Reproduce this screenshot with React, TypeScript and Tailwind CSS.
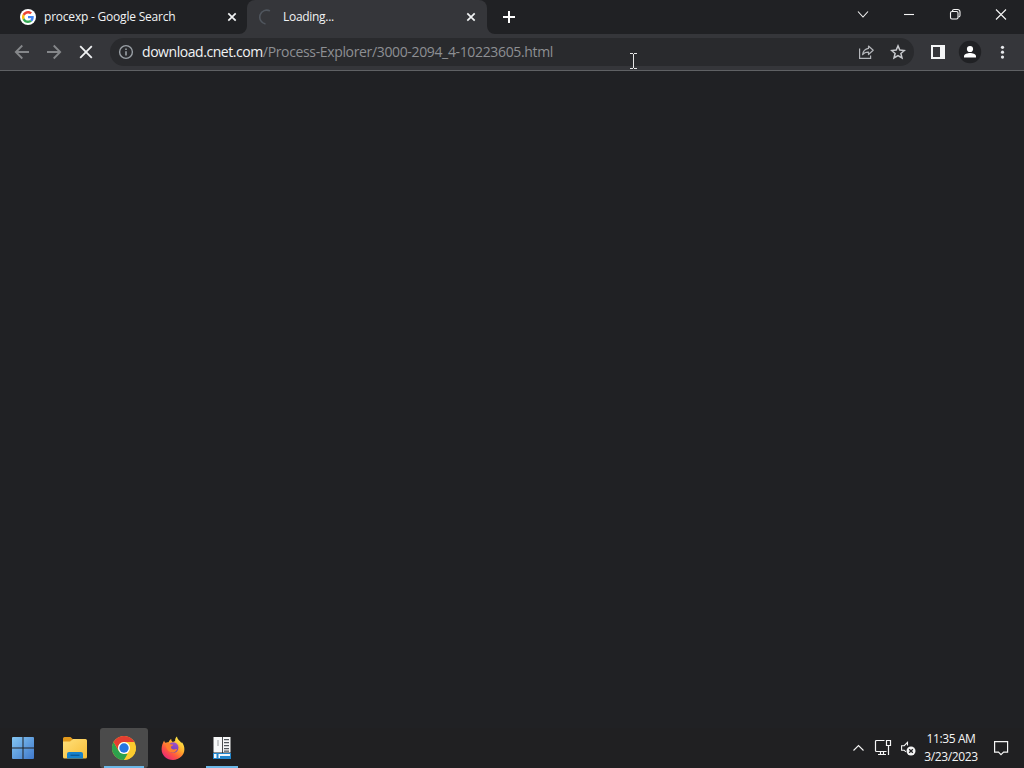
import type { ReactNode } from 'react';

function GoogleIcon() {
  return (
    <svg width="16" height="16" viewBox="0 0 16 16" className="shrink-0">
      <circle cx="8" cy="8" r="8" fill="#fff" />
      <g transform="translate(2 2) scale(0.25)">
        <path fill="#EA4335" d="M24 9.5c3.54 0 6.71 1.22 9.21 3.6l6.85-6.85C35.9 2.38 30.47 0 24 0 14.62 0 6.51 5.38 2.56 13.22l7.98 6.19C12.43 13.72 17.74 9.5 24 9.5z" />
        <path fill="#4285F4" d="M46.98 24.55c0-1.57-.15-3.09-.38-4.55H24v9.02h12.94c-.58 2.96-2.26 5.48-4.78 7.18l7.73 6c4.51-4.18 7.09-10.36 7.09-17.65z" />
        <path fill="#FBBC05" d="M10.53 28.59c-.48-1.45-.76-2.99-.76-4.59s.27-3.14.76-4.59l-7.98-6.19C.92 16.46 0 20.12 0 24c0 3.88.92 7.54 2.56 10.78l7.97-6.19z" />
        <path fill="#34A853" d="M24 48c6.48 0 11.93-2.13 15.89-5.81l-7.73-6c-2.15 1.45-4.92 2.3-8.16 2.3-6.26 0-11.57-4.22-13.47-9.91l-7.98 6.19C6.51 42.62 14.62 48 24 48z" />
      </g>
    </svg>
  );
}

function TabClose() {
  return (
    <svg width="16" height="16" viewBox="0 0 16 16" className="shrink-0" stroke="#f1f3f4" strokeWidth="1.7">
      <path d="M4.3 4.3l7.4 7.4M11.7 4.3l-7.4 7.4" />
    </svg>
  );
}

function TabStrip() {
  return (
    <div className="flex h-[34px] bg-[#202124] text-[12px] text-[#f1f3f4]">
      <div className="flex w-[247px] items-center pl-5 pr-[7px]">
        <GoogleIcon />
        <span className="ml-2 flex-1 whitespace-nowrap tracking-[-0.21px]">procexp - Google Search</span>
        <TabClose />
      </div>
      <div className="relative flex w-[240px] items-center rounded-t-lg bg-[#35363a] pl-[11px] pr-2">
        <svg width="8" height="8" viewBox="0 0 8 8" className="absolute -left-2 bottom-0">
          <path d="M8 0v8H0a8 8 0 0 0 8-8z" fill="#35363a" />
        </svg>
        <svg width="8" height="8" viewBox="0 0 8 8" className="absolute -right-2 bottom-0">
          <path d="M0 0v8h8a8 8 0 0 1-8-8z" fill="#35363a" />
        </svg>
        <svg width="16" height="16" viewBox="0 0 16 16" className="shrink-0" fill="none">
          <path d="M12 1.900A7 7 0 1 0 7.500 15" stroke="#50565e" strokeWidth="1.600" />
        </svg>
        <span className="ml-[9px] flex-1 whitespace-nowrap tracking-[-0.3px]">Loading...</span>
        <TabClose />
      </div>
      <div className="flex w-11 items-center justify-center">
        <svg width="14" height="14" viewBox="0 0 14 14" stroke="#fff" strokeWidth="2">
          <path d="M7 1v12M1 7h12" />
        </svg>
      </div>
      <div className="ml-auto flex h-7">
        <WindowButton>
          <path d="M3 5.5l5 5.5 5-5.5" />
        </WindowButton>
        <WindowButton>
          <path d="M3 8.5h10" />
        </WindowButton>
        <WindowButton>
          <rect x="3.5" y="5.5" width="7.5" height="7.5" rx="1.5" />
          <path d="M5.5 5.2c0-1 .7-1.7 1.6-1.7h3.4a2.5 2.5 0 0 1 2.5 2.5v3.4c0 .9-.6 1.6-1.6 1.6" />
        </WindowButton>
        <WindowButton>
          <path d="M3 3.5l10 10M13 3.5l-10 10" />
        </WindowButton>
      </div>
    </div>
  );
}

function WindowButton({ children }: { children: ReactNode }) {
  return (
    <div className="flex w-[46px] items-center justify-center">
      <svg width="16" height="16" viewBox="0 0 16 16" fill="none" stroke="#f5f5f5" strokeWidth="1.1">
        {children}
      </svg>
    </div>
  );
}

function Toolbar() {
  return (
    <div className="flex h-[37px] items-center border-b border-[#5f6164] bg-[#35363a] px-[14px]">
      <div className="flex w-24 gap-4">
        <svg width="16" height="16" viewBox="0 0 16 16" fill="none" stroke="#85878a" strokeWidth="1.8" className="shrink-0">
          <path d="M15 8H2M8.3 1.5L1.8 8l6.5 6.5" />
        </svg>
        <svg width="16" height="16" viewBox="0 0 16 16" fill="none" stroke="#85878a" strokeWidth="1.8" className="shrink-0">
          <path d="M1 8h13M7.7 1.5L14.2 8l-6.5 6.5" />
        </svg>
        <svg width="16" height="16" viewBox="0 0 16 16" stroke="#f1f3f4" strokeWidth="1.8" className="shrink-0">
          <path d="M2.2 2.2l11.6 11.6M13.8 2.2L2.2 13.8" />
        </svg>
      </div>
      <div className="flex h-7 w-[804px] items-center rounded-full bg-[#292a2d] px-2">
        <svg width="16" height="16" viewBox="0 0 16 16" fill="none" stroke="#9aa0a6" strokeWidth="1.4" className="shrink-0">
          <circle cx="8" cy="8" r="6.4" />
          <path d="M8 7.2v4.2M8 4.4v1.6" strokeWidth="1.6" />
        </svg>
        <span className="ml-2 flex-1 whitespace-nowrap pb-px text-[14px] tracking-[-0.35px] text-[#8d8f93]">
          <span className="tracking-[-0.44px] text-[#f1f3f4]">download.cnet.com</span>
          /Process-Explorer/3000-2094_4-10223605.html
        </span>
        <svg width="16" height="16" viewBox="0 0 16 16" fill="none" stroke="#b4b6ba" strokeWidth="1.2" className="mr-4">
          <path d="M1.600 4.500v9.900h11v-3" />
          <path d="M10.500 2l4.700 4.200-4.700 4.300V8.100C7.800 8 6 8.800 4.600 10.700 5 7.300 6.900 5 10.500 4.400z" strokeLinejoin="round" />
        </svg>
        <svg width="16" height="16" viewBox="0 0 16 16" fill="none" stroke="#c8cace" strokeWidth="1.5">
          <path d="M8 1.9l1.8 4.2 4.6.4-3.5 3 1.1 4.5-4-2.4L4 14l1.1-4.5-3.5-3 4.6-.4z" />
        </svg>
      </div>
      <div className="ml-auto flex items-center gap-3">
        <svg width="16" height="16" viewBox="0 0 16 16">
          <path d="M1 1h14v14H1zM3 3v10h7V3z" fill="#f4f5f6" fillRule="evenodd" />
        </svg>
        <svg width="24" height="24" viewBox="0 0 24 24">
          <circle cx="12" cy="12" r="11.2" fill="#202124" />
          <circle cx="12" cy="9" r="3.1" fill="#fff" />
          <path d="M6 17.500v-1.400c0-2.100 3.600-3.200 6-3.200s6 1.100 6 3.200v1.400z" fill="#fff" />
        </svg>
        <svg width="16" height="16" viewBox="0 0 16 16" fill="#e8eaed">
          <circle cx="8.500" cy="3.300" r="1.600" />
          <circle cx="8.500" cy="8.200" r="1.600" />
          <circle cx="8.500" cy="13.100" r="1.600" />
        </svg>
      </div>
    </div>
  );
}

function StartIcon() {
  return (
    <svg width="22" height="22" viewBox="0 0 22 22">
      <defs>
        <linearGradient id="start" gradientUnits="userSpaceOnUse" x1="0" y1="0" x2="22" y2="22">
          <stop offset="0" stopColor="#84c6f2" />
          <stop offset="1" stopColor="#3f78cc" />
        </linearGradient>
      </defs>
      <path d="M1 0h9.5v10.5H0V1a1 1 0 0 1 1-1zM11.5 0H21a1 1 0 0 1 1 1v9.5H11.5zM0 11.5h10.5V22H1a1 1 0 0 1-1-1zM11.5 11.5H22V21a1 1 0 0 1-1 1h-9.5z" fill="url(#start)" />
    </svg>
  );
}

function FolderIcon() {
  return (
    <svg width="24" height="22" viewBox="0 0 24 22">
      <defs>
        <linearGradient id="folder" x1="0" y1="0" x2="1" y2="1">
          <stop offset="0" stopColor="#ffe07a" />
          <stop offset="1" stopColor="#f8bd36" />
        </linearGradient>
      </defs>
      <path d="M0 5V1.5A1.5 1.5 0 0 1 1.5 0h6L10 2.200 7.500 5z" fill="#e39a1c" />
      <path d="M0 4.500h7L10 2h12.500A1.500 1.500 0 0 1 24 3.500V20a1.500 1.500 0 0 1-1.500 1.500h-21A1.500 1.500 0 0 1 0 20z" fill="url(#folder)" />
      <path d="M4 21.500V17a2 2 0 0 1 2-2h12a2 2 0 0 1 2 2v4.500z" fill="#1781cb" />
      <path d="M7.500 18.300h9" stroke="#0b5a99" strokeWidth="1.400" />
    </svg>
  );
}

function ChromeIcon() {
  return (
    <svg width="24" height="24" viewBox="0 0 24 24">
      <circle cx="12" cy="12" r="12" fill="#fccb2e" />
      <path d="M1.600 6l5.200 9 5.200 3h5.200L12 24A12 12 0 0 1 1.600 6z" fill="#2da14c" />
      <path d="M12 24l5.200-9V12h5l1.700 1.500A12 12 0 0 1 12 24z" fill="#fccb2e" />
      <path d="M1.600 6A12 12 0 0 1 22.400 6H12a6 6 0 0 0-5.200 9z" fill="#e43e31" />
      <circle cx="12" cy="12" r="6" fill="#fff" />
      <circle cx="12" cy="12" r="4.700" fill="#2676e1" />
    </svg>
  );
}

function FirefoxIcon() {
  return (
    <svg width="24" height="24" viewBox="0 0 24 24">
      <defs>
        <linearGradient id="fox" x1="0.85" y1="0.1" x2="0.2" y2="0.95">
          <stop offset="0" stopColor="#fff04a" />
          <stop offset="0.4" stopColor="#ffa62b" />
          <stop offset="0.68" stopColor="#ff593e" />
          <stop offset="1" stopColor="#e92778" />
        </linearGradient>
        <linearGradient id="globe" x1="0.7" y1="0" x2="0.3" y2="1">
          <stop offset="0" stopColor="#a650c8" />
          <stop offset="1" stopColor="#5f3fc0" />
        </linearGradient>
      </defs>
      <path d="M3.100 4.500c.3 1.300.8 1.900 1.500 2.300 1-.6 1.900-.7 3-.5.600-1.400 1.400-2.500 2.700-3.200-.2 1.500.3 2.300 1.500 2.800l2.300-.8C14 3 14.800 1.300 16 .5c.1 2 1.300 3.200 2.700 4.400.8.700 1.300 1.500 1.600 2.400l.5-1.200c1.700 2.100 2.600 4.500 2.600 7.200C23.400 19.200 18.300 24 12 24S.6 19.200.6 13.200C.6 9.800 1.700 7 3.100 4.500z" fill="url(#fox)" />
      <circle cx="12.200" cy="11.500" r="5.300" fill="url(#globe)" />
      <path d="M4.700 7.500c2.200-.8 4-.1 5.200 1h2.500c-.1 1.300-2 1.600-2.500 2.300 0 2 1.600 2.900 3.100 2.600 1.400-.3 2.300-.7 3.100 0-1 2.100-2.900 3.500-5.100 3.200-3.600-.4-6.200-4-6.300-9.100z" fill="#ff7f2e" />
    </svg>
  );
}

function ServerIcon() {
  return (
    <svg width="18" height="22" viewBox="0 0 18 22">
      <path d="M.5 0H9v15.500H.5zM9.800 0H17.500v15.500H9.800z" fill="#f6f7f8" />
      <path d="M5 3v6" stroke="#9a9da0" />
      <path d="M11 2.700h5M11 5.700h5M11 8.700h5M11 11.700h5M11 14.200h5" stroke="#50555a" strokeWidth="1.300" />
      <rect x="0.5" y="16.500" width="17" height="5" fill="#f2f7fa" stroke="#2386cc" />
      <path d="M4.500 17v4M7 20h10" stroke="#2386cc" strokeWidth="2" />
    </svg>
  );
}

function Taskbar() {
  return (
    <div className="flex h-10 bg-[#202022]">
      <div className="flex w-[46px] items-center justify-center">
        <StartIcon />
      </div>
      <div className="ml-[5px] flex w-12 items-center justify-center">
        <FolderIcon />
      </div>
      <div className="relative ml-px flex w-12 items-center justify-center rounded-[3px] bg-[#4b4b4b]">
        <ChromeIcon />
        <div className="absolute bottom-0 left-1 h-0.5 w-10 bg-[#6cb8e8]" />
      </div>
      <div className="ml-px flex w-12 items-center justify-center">
        <FirefoxIcon />
      </div>
      <div className="relative ml-px flex w-12 items-center justify-center">
        <ServerIcon />
        <div className="absolute bottom-0 left-2 h-0.5 w-8 bg-[#6cb8e8]" />
      </div>
      <div className="ml-auto flex items-center text-[#f5f5f5]">
        <svg width="16" height="16" viewBox="0 0 16 16" fill="none" stroke="currentColor" strokeWidth="1.100" className="mr-2">
          <path d="M3.500 10.500L8.500 5.500l5 5" />
        </svg>
        <svg width="18" height="18" viewBox="0 0 18 18" fill="none" stroke="currentColor" className="mr-2">
          <path d="M10.500 1.500h-8a1 1 0 0 0-1 1v9a1 1 0 0 0 1 1h10M4 15.500h8M6.500 13v2.500M9.500 13v2.500" strokeWidth="1.200" />
          <path d="M12.500 1.500h4v5h-4zM14.500 7v9" strokeWidth="1.200" />
        </svg>
        <svg width="18" height="18" viewBox="0 0 18 18" fill="none" stroke="currentColor" strokeWidth="1.100" className="-mb-0.5">
          <path d="M7.500 5.500V2.300L4.200 5.700H1.600v4.500h2.600l1.600 1.600" />
          <circle cx="11" cy="11" r="4.500" fill="#f5f5f5" stroke="none" />
          <path d="M9.200 9.200l3.600 3.600M12.800 9.200l-3.600 3.600" stroke="#202022" strokeWidth="1.300" />
        </svg>
        <div className="flex w-[66px] flex-col pb-px text-center text-[12px] leading-[18px] tracking-[-0.38px]">
          <span>11:35 AM</span>
          <span>3/23/2023</span>
        </div>
        <div className="flex w-10 justify-center pr-[6px]">
          <svg width="16" height="16" viewBox="0 0 16 16" fill="none" stroke="currentColor" strokeWidth="1.200">
            <path d="M1.600 1.600h13v10.500h-4L8 14.700 5.500 12.100H1.600z" />
          </svg>
        </div>
      </div>
    </div>
  );
}

function TextCursor() {
  return (
    <svg width="8" height="16" viewBox="0 0 8 16" className="absolute left-[630px] top-[53px]" fill="none" stroke="#e6e6e6">
      <path d="M0 .5h3M4 .5h3M0 15.500h3M4 15.500h3M3.500 1v14" />
    </svg>
  );
}

export default function App() {
  return (
    <div className="relative flex h-[768px] w-[1024px] flex-col overflow-hidden bg-[#202124] font-['Open_Sans','Noto_Sans',sans-serif]">
      <TabStrip />
      <Toolbar />
      <main className="flex-1 bg-[#202124]" />
      <Taskbar />
      <TextCursor />
    </div>
  );
}
